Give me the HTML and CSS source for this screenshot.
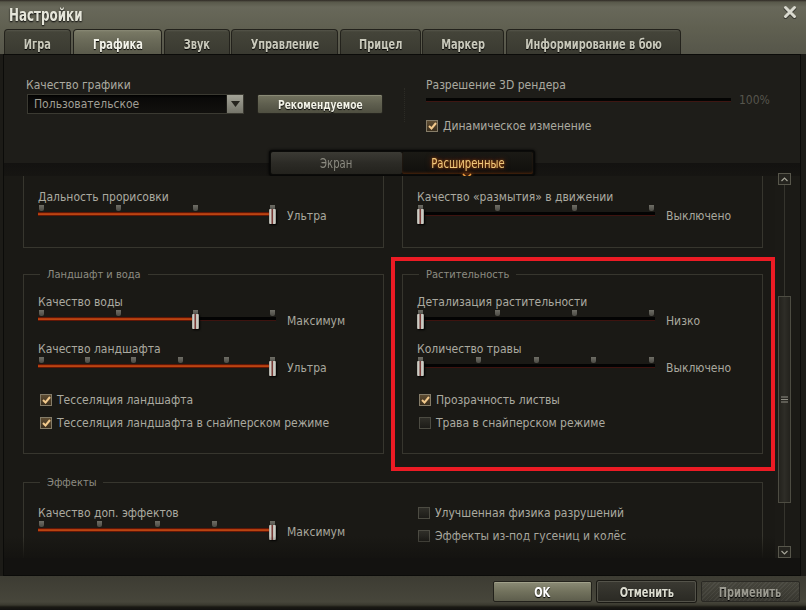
FILE: index.html
```html
<!DOCTYPE html>
<html lang="ru">
<head>
<meta charset="utf-8">
<title>Настройки</title>
<link rel="stylesheet" href="styles.css">
</head>
<body>
<div class="window">
  <div class="head">
    <header class="titlebar">
      <h1 class="title"><span class="nw left">Настройки</span></h1>
      <button class="close" aria-label="Закрыть">
        <svg width="14" height="14" viewBox="0 0 14 14"><path d="M2.5 2.5 L11.5 11.5 M11.5 2.5 L2.5 11.5" stroke="#111" stroke-width="3.6" stroke-linecap="round" opacity=".5" transform="translate(0 1)"/><path d="M2.5 2.5 L11.5 11.5 M11.5 2.5 L2.5 11.5" stroke="#d9d9cf" stroke-width="3" stroke-linecap="round"/></svg>
      </button>
    </header>
    <nav class="tabs">
      <div class="tab t-game"><span class="nw">Игра</span></div>
      <div class="tab t-gfx active"><span class="nw">Графика</span></div>
      <div class="tab t-snd"><span class="nw">Звук</span></div>
      <div class="tab t-ctl"><span class="nw">Управление</span></div>
      <div class="tab t-aim"><span class="nw">Прицел</span></div>
      <div class="tab t-mrk"><span class="nw">Маркер</span></div>
      <div class="tab t-inf"><span class="nw">Информирование в бою</span></div>
    </nav>
  </div>

  <main class="panel">
    <section class="top">
      <div class="top-left">
        <div class="label">Качество графики</div>
        <div class="top-row">
          <div class="select">
            <span>Пользовательское</span>
            <span class="select-btn"><svg width="9" height="6" viewBox="0 0 9 6"><path d="M0 0 H9 L4.5 6 Z" fill="#26251f"/></svg></span>
          </div>
          <button class="btn-rec"><span class="nw">Рекомендуемое</span></button>
        </div>
      </div>
      <div class="divider"></div>
      <div class="top-right">
        <div class="label">Разрешение 3D рендера</div>
        <div class="res-row"><div class="res-track"></div><span class="pct">100%</span></div>
        <div class="check on flush"><span class="box"><svg width="9" height="8" viewBox="0 0 9 8"><path d="M1 4 L3.5 6.5 L8 1" stroke="#f2c98c" stroke-width="2" fill="none"/></svg></span>Динамическое изменение</div>
      </div>
    </section>

    <div class="subbar">
      <div class="subtabs">
        <div class="subtab"><span class="nw">Экран</span></div>
        <div class="subtab active"><span class="nw">Расширенные</span><span class="chev"><svg width="10" height="6" viewBox="0 0 10 6"><path d="M1 1 L5 5 L9 1" stroke="#f0a040" stroke-width="1.6" fill="none"/></svg></span></div>
      </div>
    </div>

    <div class="middle">
      <div class="viewport">
        <div class="content">
          <div class="cols">
            <div class="group g1">
              <div class="setting">
                <div class="label">Дальность прорисовки</div>
                <div class="slider">
                  <div class="track">
                    <div class="ticks"><i></i><i></i><i></i><i></i></div>
                    <div class="line"><div class="fill" style="width:234.5px"></div></div>
                    <div class="thumb" style="left:231px"></div>
                  </div>
                  <span class="value">Ультра</span>
                </div>
              </div>
            </div>
            <div class="group g1">
              <div class="setting">
                <div class="label">Качество «размытия» в движении</div>
                <div class="slider">
                  <div class="track">
                    <div class="ticks"><i></i><i></i><i></i><i></i></div>
                    <div class="line"><div class="fill" style="width:0"></div></div>
                    <div class="thumb" style="left:0"></div>
                  </div>
                  <span class="value">Выключено</span>
                </div>
              </div>
            </div>
          </div>

          <div class="cols row2">
            <div class="group g2">
              <span class="legend">Ландшафт и вода</span>
              <div class="setting">
                <div class="label">Качество воды</div>
                <div class="slider">
                  <div class="track">
                    <div class="ticks"><i></i><i></i><i></i><i></i></div>
                    <div class="line"><div class="fill" style="width:157.5px"></div></div>
                    <div class="thumb" style="left:154px"></div>
                  </div>
                  <span class="value">Максимум</span>
                </div>
              </div>
              <div class="setting">
                <div class="label">Качество ландшафта</div>
                <div class="slider">
                  <div class="track">
                    <div class="ticks"><i></i><i></i><i></i><i></i><i></i><i></i></div>
                    <div class="line"><div class="fill" style="width:234.5px"></div></div>
                    <div class="thumb" style="left:231px"></div>
                  </div>
                  <span class="value">Ультра</span>
                </div>
              </div>
              <div class="checks">
                <div class="check on"><span class="box"><svg width="9" height="8" viewBox="0 0 9 8"><path d="M1 4 L3.5 6.5 L8 1" stroke="#f2c98c" stroke-width="2" fill="none"/></svg></span>Тесселяция ландшафта</div>
                <div class="check on"><span class="box"><svg width="9" height="8" viewBox="0 0 9 8"><path d="M1 4 L3.5 6.5 L8 1" stroke="#f2c98c" stroke-width="2" fill="none"/></svg></span>Тесселяция ландшафта в снайперском режиме</div>
              </div>
            </div>

            <div class="group g2 hl">
              <span class="legend">Растительность</span>
              <div class="setting">
                <div class="label">Детализация растительности</div>
                <div class="slider">
                  <div class="track">
                    <div class="ticks"><i></i><i></i><i></i><i></i></div>
                    <div class="line"><div class="fill" style="width:0"></div></div>
                    <div class="thumb" style="left:0"></div>
                  </div>
                  <span class="value">Низко</span>
                </div>
              </div>
              <div class="setting">
                <div class="label">Количество травы</div>
                <div class="slider">
                  <div class="track">
                    <div class="ticks"><i></i><i></i><i></i><i></i><i></i></div>
                    <div class="line"><div class="fill" style="width:0"></div></div>
                    <div class="thumb" style="left:0"></div>
                  </div>
                  <span class="value">Выключено</span>
                </div>
              </div>
              <div class="checks">
                <div class="check on"><span class="box"><svg width="9" height="8" viewBox="0 0 9 8"><path d="M1 4 L3.5 6.5 L8 1" stroke="#f2c98c" stroke-width="2" fill="none"/></svg></span>Прозрачность листвы</div>
                <div class="check"><span class="box"></span>Трава в снайперском режиме</div>
              </div>
            </div>
          </div>

          <div class="group wide">
            <span class="legend">Эффекты</span>
            <div class="wide-grid">
              <div class="wcol">
                <div class="setting">
                  <div class="label">Качество доп. эффектов</div>
                  <div class="slider">
                    <div class="track">
                      <div class="ticks"><i></i><i></i><i></i><i></i><i></i></div>
                      <div class="line"><div class="fill" style="width:234.5px"></div></div>
                      <div class="thumb" style="left:231px"></div>
                    </div>
                    <span class="value">Максимум</span>
                  </div>
                </div>
              </div>
              <div class="wcol right">
                <div class="check"><span class="box"></span>Улучшенная физика разрушений</div>
                <div class="check"><span class="box"></span>Эффекты из-под гусениц и колёс</div>
              </div>
            </div>
          </div>
        </div>
      </div>

      <div class="scrollbar">
        <div class="sb-btn"><svg width="7" height="5" viewBox="0 0 7 5"><path d="M0.5 4 L3.5 1 L6.5 4" stroke="#a5a498" stroke-width="1.2" fill="none"/></svg></div>
        <div class="sb-track">
          <div class="sb-thumb" style="margin-top:111px"><svg width="7" height="7" viewBox="0 0 7 7"><path d="M0 1 H7 M0 3.5 H7 M0 6 H7" stroke="#8f8e84" stroke-width="1"/></svg></div>
        </div>
        <div class="sb-btn"><svg width="7" height="5" viewBox="0 0 7 5"><path d="M0.5 1 L3.5 4 L6.5 1" stroke="#a5a498" stroke-width="1.2" fill="none"/></svg></div>
      </div>
    </div>
    <div class="panel-foot"></div>
  </main>

  <footer class="bottombar">
    <button class="btn ok"><span class="nw">OK</span></button>
    <button class="btn cancel"><span class="nw">Отменить</span></button>
    <button class="btn apply"><span class="nw">Применить</span></button>
  </footer>
</div>
</body>
</html>
```

FILE: styles.css
```css
* { box-sizing: border-box; }
html, body { margin: 0; padding: 0; }
body {
  width: 806px;
  height: 610px;
  overflow: hidden;
  background: #1c1b17;
  font-family: "DejaVu Sans Condensed", "DejaVu Sans", "Liberation Sans", sans-serif;
  font-stretch: condensed;
  font-size: 12px;
  color: #abaaa0;
}
.window {
  width: 806px;
  height: 610px;
  display: flex;
  flex-direction: column;
}
.nw {
  display: inline-block;
  white-space: nowrap;
  transform: scaleX(.78);
  transform-origin: 50% 50%;
}
.nw.left { transform-origin: 0 50%; }

/* ---------- head ---------- */
.head {
  height: 54px;
  background:
    linear-gradient(180deg, #2e2924 0, #58584a 2px, #68685a 7px, #606051 28px, #56564a 54px);
}
.titlebar {
  height: 29px;
  display: flex;
  align-items: center;
  justify-content: space-between;
  padding: 0 9px 0 9px;
}
.title {
  margin: 0;
  font-family: "DejaVu Sans Condensed", "DejaVu Sans", "Liberation Sans", sans-serif;
  font-stretch: condensed;
  font-weight: bold;
  font-size: 17px;
  line-height: 20px;
  color: #e6e6da;
  text-shadow: 0 1px 2px #000;
}
.close {
  align-self: flex-start;
  margin-top: 5px;
  width: 14px;
  height: 14px;
  padding: 0;
  border: 0;
  background: none;
}
.close svg { display: block; }

.tabs {
  height: 25px;
  display: flex;
  gap: 1px;
  padding-left: 4px;
}
.tab {
  height: 25px;
  padding-top: 3px;
  display: flex;
  align-items: center;
  justify-content: center;
  border: 1px solid #23221c;
  border-bottom: 0;
  border-radius: 4px 4px 0 0;
  background: linear-gradient(180deg, #55554a 0, #444439 2px, #3a3a31 100%);
  font-family: "DejaVu Sans Condensed", "DejaVu Sans", "Liberation Sans", sans-serif;
  font-stretch: condensed;
  font-weight: bold;
  font-size: 14px;
  color: #c9c9bb;
  text-shadow: 0 1px 1px #000;
  white-space: nowrap;
}
.tab.active {
  background: linear-gradient(180deg, #8a8a76 0, #787864 2px, #6c6c5a 40%, #5a5a4b 100%);
  color: #f4f4ea;
}
.t-game { width: 67px; }
.t-gfx { width: 89px; margin-left: 1px; }
.t-snd { width: 66px; margin-left: 1px; }
.t-ctl { width: 107px; }
.t-aim { width: 81px; margin-left: 1px; }
.t-mrk { width: 82px; }
.t-inf { width: 175px; margin-left: 1px; }

/* ---------- panel ---------- */
.panel {
  height: 522px;
  margin: 0 5px 0 3px;
  border: 1px solid #0b0b09;
  background: #1b1a16;
  display: flex;
  flex-direction: column;
}
.top {
  height: 95px;
  flex: none;
  display: flex;
  padding: 23px 0 0 22px;
  background: #1e1d19;
}
.top-left { width: 378px; }
.divider {
  width: 1px;
  height: 34px;
  margin-top: 10px;
  border-left: 1px dotted #2c2b25;
}
.top-right { padding-left: 21px; }
.label {
  line-height: 14px;
  white-space: nowrap;
  color: #abaaa0;
}
.top-row { display: flex; margin-top: 2px; }
.select {
  margin-left: 1px;
  width: 217px;
  height: 20px;
  display: flex;
  align-items: center;
  justify-content: space-between;
  padding-left: 6px;
  background: linear-gradient(180deg, #080807, #12110e);
  border: 1px solid #3b3a32;
  box-shadow: inset 0 1px 2px #000;
  color: #a09f95;
}
.select-btn {
  width: 17px;
  height: 18px;
  display: flex;
  align-items: center;
  justify-content: center;
  background: linear-gradient(180deg, #a3a397, #75756a);
  border-left: 1px solid #1e1d19;
}
.btn-rec {
  margin-left: 13px;
  width: 126px;
  height: 20px;
  padding: 0;
  border: 1px solid #25241e;
  border-radius: 2px;
  background: linear-gradient(180deg, #73735f 0, #5f5f4f 50%, #4f4f41 100%);
  box-shadow: inset 0 1px 0 #8a8a76;
  font-family: "DejaVu Sans Condensed", "DejaVu Sans", "Liberation Sans", sans-serif;
  font-stretch: condensed;
  font-weight: bold;
  font-size: 13px;
  color: #f2f2e6;
  text-shadow: 0 1px 1px #000;
}
.res-row {
  height: 16px;
  display: flex;
  align-items: center;
}
.res-track {
  width: 305px;
  height: 4px;
  background: #040403;
  border-bottom: 1px solid #3e1612;
}
.pct { margin-left: 8px; color: #56554d; }
.top-right .check { margin-top: 10px; }

/* ---------- sub tabs ---------- */
.subbar {
  height: 26px;
  flex: none;
  display: flex;
  justify-content: center;
  background: linear-gradient(180deg, #1e1d19 0, #1e1d19 13px, #131210 13px, #161512 26px);
}
.subtabs {
  height: 26px;
  display: flex;
  padding: 1px;
  border: 1px solid #080807;
  border-radius: 3px;
  background: #0b0b09;
  box-shadow: 0 0 3px #000;
}
.subtab {
  width: 131px;
  display: flex;
  align-items: center;
  justify-content: center;
  border-radius: 2px;
  background: linear-gradient(180deg, #3b3a34 0, #2c2b26 50%, #23221d 100%);
  font-family: "DejaVu Sans Condensed", "DejaVu Sans", "Liberation Sans", sans-serif;
  font-stretch: condensed;
  font-size: 14px;
  color: #8b8a80;
}
.subtab .nw { transform: scaleX(.8); }
.subtab.active {
  position: relative;
  background: linear-gradient(180deg, #1b1a15 0, #100f0c 100%);
  color: #f0c87c;
  text-shadow: 0 0 3px #b0500c, 0 0 7px #7a2c04;
  box-shadow: inset 0 -2px 3px -1px rgba(200, 80, 10, .35);
}
.chev {
  position: absolute;
  left: 60px;
  bottom: -5px;
  width: 10px;
  height: 6px;
  line-height: 0;
  filter: drop-shadow(0 0 2px #e06010);
}

/* ---------- scroll area ---------- */
.middle {
  height: 382px;
  flex: none;
  display: flex;
}
.viewport {
  position: relative;
  width: 771px;
  height: 382px;
  overflow: hidden;
  background: #1a1915;
}
.viewport::after {
  content: "";
  position: absolute;
  left: 0;
  right: 0;
  bottom: 0;
  height: 22px;
  background: linear-gradient(180deg, rgba(20, 19, 16, 0), rgba(20, 19, 16, .97));
}
.content { margin-top: -7px; padding-left: 19px; }
.cols {
  width: 740px;
  display: grid;
  grid-template-columns: 361px 361px;
  column-gap: 18px;
}
.row2 { margin-top: 26px; }
.group {
  position: relative;
  border: 1px solid #37362e;
  padding: 20px 0 20px 14px;
}
.g2 { padding-bottom: 22px; }
.legend {
  position: absolute;
  top: -7px;
  left: 16px;
  padding: 0 7px;
  background: #1a1915;
  font-size: 11px;
  line-height: 13px;
  color: #8d8c82;
  white-space: nowrap;
}
.hl::after {
  content: "";
  position: absolute;
  left: -12px;
  right: -13px;
  top: -18px;
  bottom: -18px;
  border: 4px solid #ec1b24;
}
.wide {
  width: 740px;
  margin-top: 28px;
  padding: 23px 0 40px 0;
}
.wide-grid {
  display: grid;
  grid-template-columns: 378px 1fr;
}
.wcol { padding-left: 14px; }
.wcol.right { margin-top: -1px; }

/* ---------- settings ---------- */
.setting + .setting { margin-top: 10px; }
.slider {
  height: 22px;
  margin-top: 1px;
  display: flex;
  align-items: center;
}
.track {
  position: relative;
  width: 238px;
  height: 22px;
  flex: none;
}
.ticks {
  position: absolute;
  left: 1px;
  right: 1px;
  top: 0;
  height: 6px;
  display: flex;
  justify-content: space-between;
}
.ticks i {
  width: 5px;
  height: 6px;
  border-radius: 0 0 2px 2px;
  background: linear-gradient(180deg, #6f6e66, #4b4a44);
}
.line {
  position: absolute;
  left: 0;
  right: 0;
  top: 7px;
  height: 4px;
  background: #030303;
  border-bottom: 1px solid #3e130f;
}
.fill {
  height: 4px;
  background: linear-gradient(180deg, #3e0c05 0, #8c2408 30%, #e8641a 50%, #8c2408 75%, #3a0a04 100%);
}
.thumb {
  position: absolute;
  top: 4px;
  width: 7px;
  height: 15px;
  border-radius: 1px;
  background: linear-gradient(90deg, #8a8a82 0, #dcdcd4 1px, #bdbdb5 2px, #7a3a36 3px, #7a3a36 4px, #bdbdb5 4px, #cfcfc7 6px, #777770 7px);
  box-shadow: 1px 1px 2px #000;
}
.value {
  margin-left: 11px;
  white-space: nowrap;
  color: #a9a89e;
}
.checks { margin-top: 13px; }
.check {
  height: 16px;
  display: flex;
  align-items: center;
  white-space: nowrap;
  color: #abaaa0;
}
.check + .check { margin-top: 7px; }
.box {
  width: 12px;
  height: 12px;
  flex: none;
  margin: 0 5px 0 2px;
  display: flex;
  align-items: center;
  justify-content: center;
  border: 1px solid #4c4b42;
  background: linear-gradient(180deg, #2f2e28, #1d1c18);
}
.check.on .box {
  border-color: #857c68;
  background: linear-gradient(180deg, #5e4c32, #3a2e1d);
}
.check.flush .box { margin-left: 0; }

/* ---------- scrollbar ---------- */
.scrollbar {
  width: 13px;
  height: 385px;
  margin: -3px 0 0 3px;
  display: flex;
  flex-direction: column;
}
.sb-btn {
  width: 13px;
  height: 12px;
  flex: none;
  display: flex;
  align-items: center;
  justify-content: center;
  border: 1px solid #57564b;
  background: #24231e;
}
.sb-track {
  position: relative;
  flex: 1;
}
.sb-track::before {
  content: "";
  position: absolute;
  left: 6px;
  top: 0;
  bottom: 0;
  width: 1px;
  background: #35342d;
}
.sb-thumb {
  position: relative;
  height: 207px;
  display: flex;
  align-items: center;
  justify-content: center;
  border: 1px solid #4d4c42;
  background: linear-gradient(90deg, #23221d, #2e2d27 50%, #23221d);
}
.panel-foot {
  height: 17px;
  flex: none;
  background: #131210;
}

/* ---------- bottom bar ---------- */
.bottombar {
  height: 34px;
  display: flex;
  justify-content: flex-end;
  gap: 5px;
  padding: 5px 6px 0 0;
  background: linear-gradient(180deg, #3d3c33 0, #47463b 26px, #3a392f 29px, #1a1914 31px, #121110 34px);
}
.btn {
  height: 21px;
  width: 99px;
  padding: 0;
  border-radius: 2px;
  font-family: "DejaVu Sans Condensed", "DejaVu Sans", "Liberation Sans", sans-serif;
  font-stretch: condensed;
  font-weight: bold;
  font-size: 14px;
  text-shadow: 0 1px 1px #000;
}
.ok {
  border: 1px solid #22211b;
  background: linear-gradient(180deg, #8b8b76 0, #74745f 45%, #5d5d4c 100%);
  box-shadow: inset 0 1px 0 #a0a08a;
  color: #ffffff;
}
.cancel {
  border: 1px solid #54534a;
  background: linear-gradient(180deg, #3a3932 0, #2b2a24 100%);
  box-shadow: 0 0 0 1px #1a1914;
  color: #dcdcd0;
}
.apply {
  border: 1px solid #2a2924;
  background:
    repeating-linear-gradient(135deg, rgba(255,255,255,.05) 0 1px, rgba(0,0,0,0) 1px 3px),
    linear-gradient(180deg, #46453c, #383730);
  color: #9b9a90;
}
```
